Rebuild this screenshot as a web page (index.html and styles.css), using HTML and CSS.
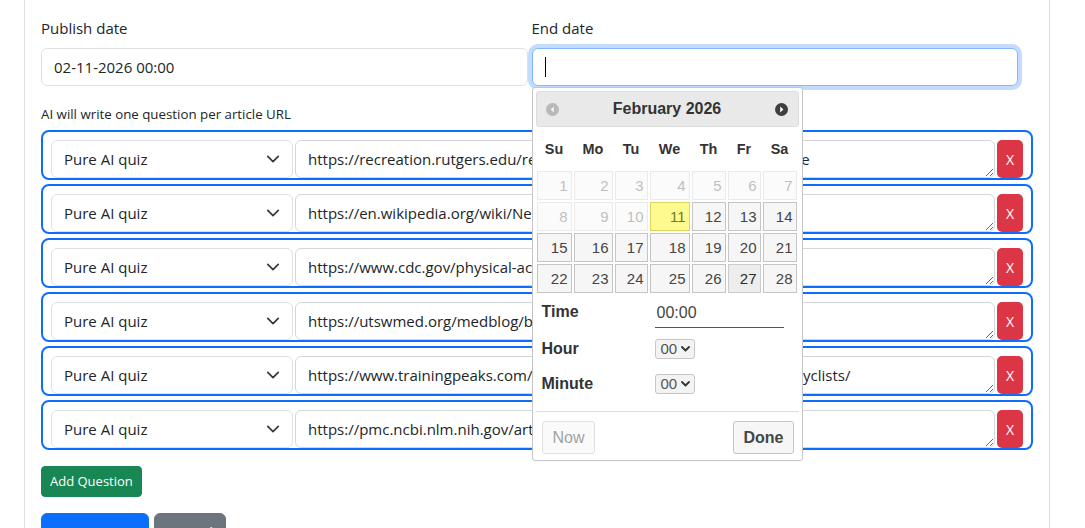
FILE: index.html
```html
<!DOCTYPE html>
<html>
<head>
<meta charset="utf-8">
<title>Quiz</title>
<link rel="stylesheet" href="styles.css">
</head>
<body>
<div class="card">
  <div class="date-row">
    <div class="field">
      <label class="form-label">Publish date</label>
      <div class="input">02-11-2026 00:00</div>
    </div>
    <div class="field">
      <label class="form-label">End date</label>
      <div class="end-wrap">
        <div class="input focus"><span class="caret"></span></div>
        <div class="dp">
          <div class="dp-header">
            <span class="dp-nav"><svg width="13" height="13" viewBox="0 0 13 13"><circle cx="6.5" cy="6.5" r="6.5" fill="#b9b9b9"/><polygon points="7.8,3.6 7.8,9.4 4.6,6.5" fill="#f2f2f2"/></svg></span>
            <span class="dp-title">February 2026</span>
            <span class="dp-nav"><svg width="13" height="13" viewBox="0 0 13 13"><circle cx="6.5" cy="6.5" r="6.5" fill="#3f3f3f"/><polygon points="5.2,3.6 5.2,9.4 8.4,6.5" fill="#ffffff"/></svg></span>
          </div>
          <div class="dp-dow">
            <div>Su</div><div>Mo</div><div>Tu</div><div>We</div><div>Th</div><div>Fr</div><div>Sa</div>
          </div>
          <div class="dp-days">
            <div class="day off">1</div><div class="day off">2</div><div class="day off">3</div><div class="day off">4</div><div class="day off">5</div><div class="day off">6</div><div class="day off">7</div>
            <div class="day off">8</div><div class="day off">9</div><div class="day off">10</div><div class="day today">11</div><div class="day">12</div><div class="day">13</div><div class="day">14</div>
            <div class="day">15</div><div class="day">16</div><div class="day">17</div><div class="day">18</div><div class="day">19</div><div class="day">20</div><div class="day">21</div>
            <div class="day">22</div><div class="day">23</div><div class="day">24</div><div class="day">25</div><div class="day">26</div><div class="day hover">27</div><div class="day">28</div>
          </div>
          <div class="tp">
            <div class="tp-row tp-row-time"><div class="tp-label">Time</div><div class="tp-time">00:00</div></div>
            <div class="tp-row tp-row-hour"><div class="tp-label">Hour</div><div class="tp-select">00<svg width="9" height="6" viewBox="0 0 9 6"><path d="M1 1l3.5 3.5L8 1" fill="none" stroke="#333" stroke-width="1.8" stroke-linecap="round" stroke-linejoin="round"/></svg></div></div>
            <div class="tp-row tp-row-min"><div class="tp-label">Minute</div><div class="tp-select">00<svg width="9" height="6" viewBox="0 0 9 6"><path d="M1 1l3.5 3.5L8 1" fill="none" stroke="#333" stroke-width="1.8" stroke-linecap="round" stroke-linejoin="round"/></svg></div></div>
          </div>
          <div class="dp-buttons">
            <button class="dp-btn dp-now">Now</button>
            <button class="dp-btn dp-done">Done</button>
          </div>
        </div>
      </div>
    </div>
  </div>

  <div class="hint">AI will write one question per article URL</div>

  <div class="questions">
    <div class="qrow">
      <div class="qselect"><span>Pure AI quiz</span><svg width="14" height="14" viewBox="0 0 16 16"><path d="m2 5 6 6 6-6" fill="none" stroke="#343a40" stroke-width="2" stroke-linecap="round" stroke-linejoin="round"/></svg></div>
      <textarea class="qurl" rows="1">https://recreation.rutgers.edu/recreation-news/real-benefits-of-exercise</textarea>
      <button class="qdel">X</button>
    </div>
    <div class="qrow">
      <div class="qselect"><span>Pure AI quiz</span><svg width="14" height="14" viewBox="0 0 16 16"><path d="m2 5 6 6 6-6" fill="none" stroke="#343a40" stroke-width="2" stroke-linecap="round" stroke-linejoin="round"/></svg></div>
      <textarea class="qurl" rows="1">https://en.wikipedia.org/wiki/Neuroplasticity</textarea>
      <button class="qdel">X</button>
    </div>
    <div class="qrow">
      <div class="qselect"><span>Pure AI quiz</span><svg width="14" height="14" viewBox="0 0 16 16"><path d="m2 5 6 6 6-6" fill="none" stroke="#343a40" stroke-width="2" stroke-linecap="round" stroke-linejoin="round"/></svg></div>
      <textarea class="qurl" rows="1">https://www.cdc.gov/physical-activity-basics/benefits/index.html</textarea>
      <button class="qdel">X</button>
    </div>
    <div class="qrow">
      <div class="qselect"><span>Pure AI quiz</span><svg width="14" height="14" viewBox="0 0 16 16"><path d="m2 5 6 6 6-6" fill="none" stroke="#343a40" stroke-width="2" stroke-linecap="round" stroke-linejoin="round"/></svg></div>
      <textarea class="qurl" rows="1">https://utswmed.org/medblog/benefits-exercise/</textarea>
      <button class="qdel">X</button>
    </div>
    <div class="qrow">
      <div class="qselect"><span>Pure AI quiz</span><svg width="14" height="14" viewBox="0 0 16 16"><path d="m2 5 6 6 6-6" fill="none" stroke="#343a40" stroke-width="2" stroke-linecap="round" stroke-linejoin="round"/></svg></div>
      <textarea class="qurl" rows="1">https://www.trainingpeaks.com/blog/benefits-of-strength-training-for-cyclists/</textarea>
      <button class="qdel">X</button>
    </div>
    <div class="qrow">
      <div class="qselect"><span>Pure AI quiz</span><svg width="14" height="14" viewBox="0 0 16 16"><path d="m2 5 6 6 6-6" fill="none" stroke="#343a40" stroke-width="2" stroke-linecap="round" stroke-linejoin="round"/></svg></div>
      <textarea class="qurl" rows="1">https://pmc.ncbi.nlm.nih.gov/articles/PMC1402378/</textarea>
      <button class="qdel">X</button>
    </div>
  </div>

  <button class="btn btn-success btn-sm">Add Question</button>

  <div class="actions">
    <button class="btn btn-primary">Create Quiz</button>
    <button class="btn btn-secondary">Cancel</button>
  </div>
</div>
</body>
</html>
```

FILE: styles.css
```css
* { box-sizing: border-box; }

html, body {
  margin: 0;
  padding: 0;
  background: #fff;
}

body {
  font-family: "Open Sans", "Noto Sans", sans-serif;
  font-size: 15px;
  line-height: 24px;
  color: #212529;
  overflow: hidden;
}

.card {
  margin-left: 24px;
  width: 1026px;
  min-height: 600px;
  border-left: 1px solid #dee2e6;
  border-right: 1px solid #dee2e6;
  padding: 16px 16px 0;
  background: #fff;
}

.date-row {
  display: grid;
  grid-template-columns: 1fr 1fr;
  column-gap: 4px;
  width: 977px;
  margin-bottom: 18px;
}

.form-label {
  display: block;
  margin-bottom: 8px;
  line-height: 24px;
}

.input {
  height: 38px;
  border: 1px solid #dee2e6;
  border-radius: 6px;
  padding: 6px 12px;
  line-height: 24px;
  background: #fff;
  color: #212529;
}

.input.focus {
  border-color: #86b7fe;
  box-shadow: 0 0 0 4px rgba(13, 110, 253, 0.25);
  display: flex;
  align-items: center;
}

.caret {
  display: block;
  width: 1px;
  height: 20px;
  background: #000;
}

.end-wrap {
  position: relative;
}

/* ---------- datepicker popup ---------- */
.dp {
  position: absolute;
  left: 0;
  top: 39px;
  z-index: 10;
  width: 271px;
  height: 374px;
  padding: 3px;
  background: #fff;
  border: 1px solid #c5c5c5;
  border-radius: 3px;
  font-family: "Liberation Sans", Arial, sans-serif;
  color: #333;
}

.dp-header {
  height: 36px;
  display: flex;
  align-items: center;
  justify-content: space-between;
  padding: 0 9px;
  background: #e9e9e9;
  border: 1px solid #dddddd;
  border-radius: 3px;
}

.dp-nav {
  display: flex;
  width: 13px;
  height: 13px;
}

.dp-title {
  font-size: 16px;
  font-weight: bold;
  color: #333;
  line-height: 34px;
}

.dp-dow,
.dp-days {
  display: grid;
  grid-template-columns: 35px 39px 33px 40px 34px 33px 34px;
  column-gap: 2px;
  margin-left: 1px;
}

.dp-dow {
  height: 44px;
  align-items: center;
  font-size: 14.4px;
  font-weight: bold;
  color: #333;
  text-align: center;
}

.dp-days {
  row-gap: 2px;
  grid-auto-rows: 29px;
}

.day {
  border: 1px solid #c5c5c5;
  background: #f6f6f6;
  color: #454545;
  font-size: 15px;
  line-height: 27px;
  text-align: right;
  padding-right: 3px;
}

.day.off {
  opacity: 0.35;
}

.day.today {
  border-color: #dad55e;
  background: #fffa90;
  color: #777620;
}

.day.hover {
  border-color: #cccccc;
  background: #ededed;
  color: #2b2b2b;
}

.tp {
  padding: 7px 0 0 6px;
}

.tp-row {
  display: grid;
  grid-template-columns: 113px auto;
  align-items: start;
}

.tp-label {
  font-size: 16px;
  font-weight: bold;
  color: #333;
}

.tp-row-time {
  height: 28px;
}

.tp-row-time .tp-label {
  line-height: 24px;
}

.tp-time {
  width: 129px;
  height: 28px;
  padding: 1px 0 0 2px;
  border-bottom: 1px solid #555;
  font-size: 16px;
  line-height: 24px;
  color: #444;
}

.tp-row-hour {
  margin-top: 11px;
  height: 20px;
}

.tp-row-min {
  margin-top: 15px;
  height: 20px;
}

.tp-row-hour .tp-label,
.tp-row-min .tp-label {
  line-height: 20px;
}

.tp-select {
  width: 40px;
  height: 20px;
  display: flex;
  align-items: center;
  justify-content: space-between;
  padding: 0 4px 0 5px;
  border: 1px solid #c6c6c6;
  border-radius: 3px;
  background: #f3f3f3;
  font-size: 15px;
  color: #555;
  line-height: 18px;
}

.dp-buttons {
  margin-top: 17px;
  border-top: 1px solid #dddddd;
  padding: 9px 5px 0 6px;
  display: flex;
  justify-content: space-between;
}

.dp-btn {
  height: 33px;
  padding: 0 10px;
  border: 1px solid #c5c5c5;
  border-radius: 3px;
  background: #f6f6f6;
  font-family: "Liberation Sans", Arial, sans-serif;
  font-size: 16px;
  color: #454545;
}

.dp-now {
  opacity: 0.5;
  width: 53px;
}

.dp-done {
  font-weight: bold;
  width: 61px;
}

/* ---------- hint & question rows ---------- */
.hint {
  font-size: 13.3px;
  line-height: 21px;
  margin-bottom: 5px;
}

.questions {
  display: flex;
  flex-direction: column;
  gap: 4px;
  margin-bottom: 16px;
}

.qrow {
  display: flex;
  gap: 2px;
  height: 50px;
  padding: 8px 8px 0;
  border: 2px solid #0d6efd;
  border-radius: 8px;
}

.qselect {
  width: 242px;
  flex: none;
  height: 38px;
  display: flex;
  align-items: center;
  justify-content: space-between;
  padding: 0 12px;
  border: 1px solid #dee2e6;
  border-radius: 6px;
  background: #fff;
}

.qselect svg {
  display: block;
}

.qurl {
  flex: 1;
  min-width: 0;
  height: 38px;
  margin: 0;
  padding: 6px 12px;
  border: 1px solid #d3d7dc;
  border-radius: 6px;
  font-family: "Open Sans", "Noto Sans", sans-serif;
  font-size: 15px;
  line-height: 24px;
  color: #212529;
  white-space: pre;
  overflow: hidden;
  resize: vertical;
  outline: none;
}

.qdel {
  flex: none;
  width: 26px;
  height: 38px;
  padding: 0;
  border: none;
  border-radius: 5px;
  background: #dc3545;
  color: #fff;
  font-family: "Open Sans", "Noto Sans", sans-serif;
  font-size: 14px;
}

/* ---------- buttons ---------- */
.btn {
  display: inline-block;
  border: 1px solid transparent;
  border-radius: 6px;
  padding: 6px 12px;
  font-family: "Open Sans", "Noto Sans", sans-serif;
  font-size: 15px;
  line-height: 24px;
  color: #fff;
  vertical-align: top;
}

.btn-sm {
  padding: 3px 8px;
  font-size: 13px;
  line-height: 23px;
  border-radius: 4px;
}

.btn-success {
  background: #198754;
  border-color: #198754;
}

.btn-primary {
  background: #0d6efd;
  border-color: #0d6efd;
}

.btn-secondary {
  background: #6c757d;
  border-color: #6c757d;
}

.actions {
  margin-top: 16px;
  display: flex;
  gap: 5px;
}
```
